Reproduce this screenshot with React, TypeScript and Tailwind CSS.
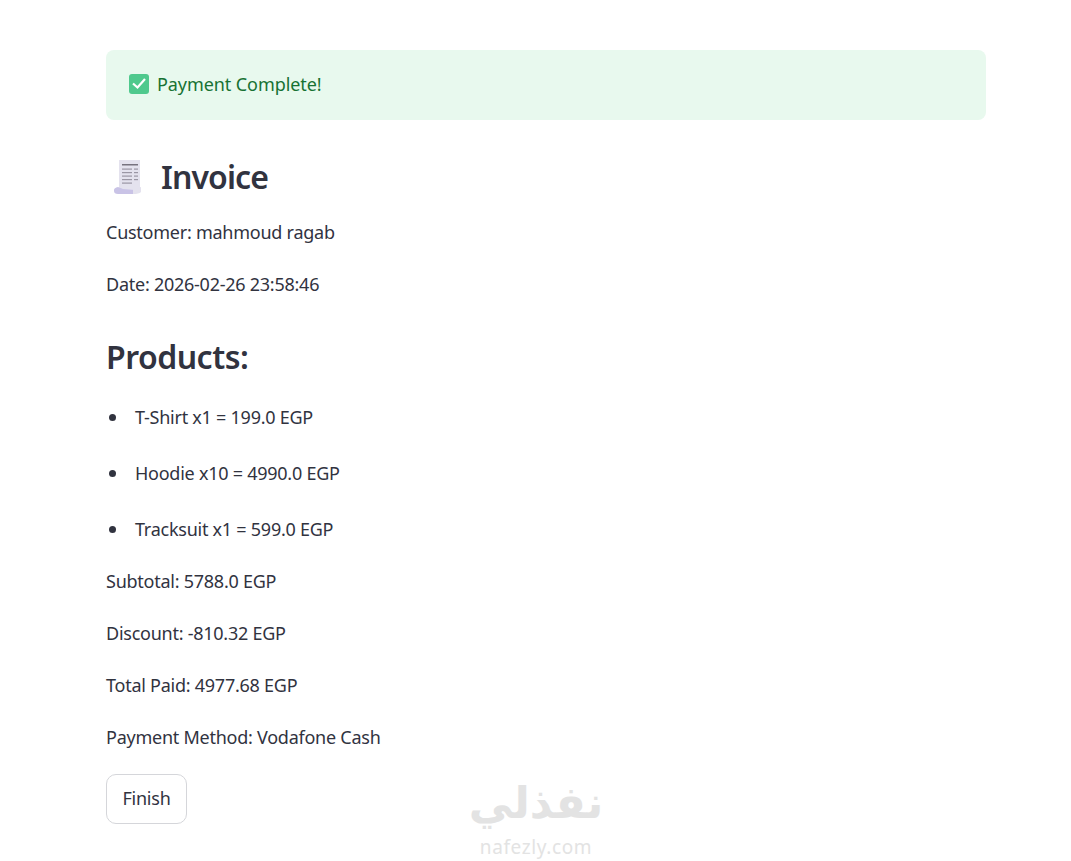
const font = { fontFamily: '"Noto Sans", sans-serif' };

function CheckIcon() {
    return (
        <svg width="20" height="20" viewBox="0 0 20 20" className="shrink-0">
            <rect x="0" y="0" width="20" height="20" rx="3" fill="#4fc98d" />
            <path d="M4 9.5 L8.5 13.5 L16 5" fill="none" stroke="#ffffff" strokeWidth="2.2" />
        </svg>
    );
}

function ReceiptIcon() {
    return (
        <svg width="32" height="36" viewBox="0 0 32 36">
            <path d="M6 1 L27 1 L27 33 L6 33 Z" fill="#e4e2ee" />
            <path d="M1 31 Q1 29 5 28 L10 30 L22 31 L22 35 L5 35 Q1 35 1 32 Z" fill="#c9c3e6" />
            <path d="M20 30 L28 28 L28 33 Q26 35 20 35 Z" fill="#e4e2ee" />
            <rect x="9" y="5" width="16" height="1.5" fill="#77737f" />
            <rect x="9" y="9.5" width="10" height="1.2" fill="#9a96a4" />
            <rect x="21" y="9.5" width="4" height="1.2" fill="#9a96a4" />
            <rect x="9" y="13" width="10" height="1.2" fill="#9a96a4" />
            <rect x="21" y="13" width="4" height="1.2" fill="#9a96a4" />
            <rect x="9" y="16.5" width="10" height="1.2" fill="#9a96a4" />
            <rect x="21" y="16.5" width="4" height="1.2" fill="#9a96a4" />
            <rect x="9" y="20" width="10" height="1.2" fill="#9a96a4" />
            <rect x="21" y="20" width="4" height="1.2" fill="#9a96a4" />
            <rect x="9" y="23.5" width="10" height="1.2" fill="#9a96a4" />
        </svg>
    );
}

const items = ['T-Shirt x1 = 199.0 EGP', 'Hoodie x10 = 4990.0 EGP', 'Tracksuit x1 = 599.0 EGP'];
const totals = ['Subtotal: 5788.0 EGP', 'Discount: -810.32 EGP', 'Total Paid: 4977.68 EGP', 'Payment Method: Vodafone Cash'];

export default function App() {
    return (
        <div style={font} className="relative h-[861px] overflow-hidden bg-white text-[18px] leading-[28px] tracking-[-0.25px] text-[#31333f]">
            <div className="w-[880px] ml-[106px] pt-[50px]">
                <div className="flex h-[70px] items-center gap-2 rounded-lg bg-[#e8f9ee] pb-[2px] pl-[23px] tracking-[-0.08px] text-[#177233]">
                    <CheckIcon />
                    <span>Payment Complete!</span>
                </div>

                <h1 className="mt-[37px] flex h-[40px] items-center gap-[16px] pl-[7px] text-[32px] font-semibold tracking-[-0.9px]">
                    <ReceiptIcon />
                    <span>Invoice</span>
                </h1>

                <p className="mt-[21px]">Customer: mahmoud ragab</p>
                <p className="mt-6">Date: 2026-02-26 23:58:46</p>

                <h2 className="mt-[40px] h-[40px] text-[32px] font-semibold leading-[38px] tracking-[-0.5px]">Products:</h2>

                <ul className="mt-[25px] flex flex-col gap-[28px]">
                    {items.map((item) => (
                        <li key={item} className="flex items-center">
                            <span className="ml-[3px] mr-[19px] h-[7px] w-[7px] rounded-full bg-[#31333f]"></span>
                            {item}
                        </li>
                    ))}
                </ul>

                <div className="mt-6 flex flex-col gap-6">
                    {totals.map((line) => (
                        <p key={line}>{line}</p>
                    ))}
                </div>

                <button className="mt-[23px] h-[50px] w-[81px] rounded-[10px] border border-[#d5d6da] bg-white pb-[2px]">
                    Finish
                </button>
            </div>

            <div className="absolute left-[436px] top-[778px] w-[200px] text-center text-[#e3e3e3]">
                <div className="text-[44px] font-bold leading-[50px]" style={{ fontFamily: '"DejaVu Sans", sans-serif' }}>نفذلي</div>
                <div className="mt-[6px] text-[19px] leading-[26px] tracking-[0.6px]">nafezly.com</div>
            </div>
        </div>
    );
}
